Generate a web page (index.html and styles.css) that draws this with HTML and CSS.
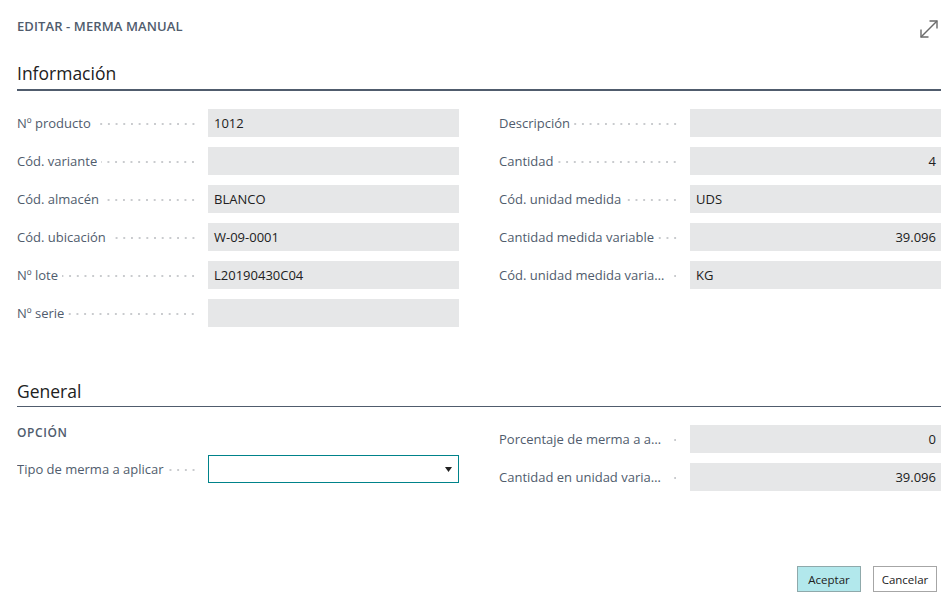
FILE: index.html
```html
<!DOCTYPE html>
<html lang="es">
<head>
<meta charset="utf-8">
<title>Editar - Merma manual</title>
<link rel="stylesheet" href="styles.css">
</head>
<body>
<div class="page">
  <header class="header">
    <div class="title">EDITAR - MERMA MANUAL</div>
    <button class="expand" aria-label="Expandir">
      <svg width="22" height="22" viewBox="0 0 22 22" fill="none" stroke="#6b6b6b" stroke-width="1.4">
        <path d="M3 19 L19 3"/>
        <path d="M11.5 3 H19 V10.5"/>
        <path d="M3 11.5 V19 H10.5"/>
      </svg>
    </button>
  </header>

  <section class="section">
    <h2 class="section-title strong">Información</h2>
    <div class="grid">
      <div class="col">
        <div class="field"><div class="label"><span class="text">Nº producto</span><span class="leader"></span></div><div class="value">1012</div></div>
        <div class="field"><div class="label"><span class="text">Cód. variante</span><span class="leader"></span></div><div class="value"></div></div>
        <div class="field"><div class="label"><span class="text">Cód. almacén</span><span class="leader"></span></div><div class="value">BLANCO</div></div>
        <div class="field"><div class="label"><span class="text">Cód. ubicación</span><span class="leader"></span></div><div class="value">W-09-0001</div></div>
        <div class="field"><div class="label"><span class="text">Nº lote</span><span class="leader"></span></div><div class="value">L20190430C04</div></div>
        <div class="field"><div class="label"><span class="text">Nº serie</span><span class="leader"></span></div><div class="value"></div></div>
      </div>
      <div class="col">
        <div class="field"><div class="label"><span class="text">Descripción</span><span class="leader"></span></div><div class="value"></div></div>
        <div class="field"><div class="label"><span class="text">Cantidad</span><span class="leader"></span></div><div class="value num">4</div></div>
        <div class="field"><div class="label"><span class="text">Cód. unidad medida</span><span class="leader"></span></div><div class="value">UDS</div></div>
        <div class="field"><div class="label"><span class="text">Cantidad medida variable</span><span class="leader"></span></div><div class="value num">39.096</div></div>
        <div class="field"><div class="label"><span class="text">Cód. unidad medida variable</span><span class="leader"></span></div><div class="value">KG</div></div>
      </div>
    </div>
  </section>

  <section class="section general">
    <h2 class="section-title thin">General</h2>
    <div class="grid">
      <div class="col">
        <div class="caption">OPCIÓN</div>
        <div class="field"><div class="label"><span class="text">Tipo de merma a aplicar</span><span class="leader"></span></div>
          <div class="value select"><span></span>
            <svg class="caret" width="7" height="5" viewBox="0 0 7 5"><path d="M0 0 H7 L3.5 5 Z" fill="#222"/></svg>
          </div>
        </div>
      </div>
      <div class="col">
        <div class="field"><div class="label"><span class="text">Porcentaje de merma a aplicar</span><span class="leader"></span></div><div class="value num">0</div></div>
        <div class="field"><div class="label"><span class="text">Cantidad en unidad variable</span><span class="leader"></span></div><div class="value num">39.096</div></div>
      </div>
    </div>
  </section>

  <footer class="footer">
    <button class="btn primary">Aceptar</button>
    <button class="btn">Cancelar</button>
  </footer>
</div>
</body>
</html>
```

FILE: styles.css
```css
* { box-sizing: border-box; }
html, body { margin: 0; padding: 0; background: #fff; }
body {
  font-family: "Open Sans", "Noto Sans", "DejaVu Sans", sans-serif;
  color: #212121;
  width: 952px;
  height: 600px;
  overflow: hidden;
}
.page { padding: 0 11px 0 17px; }

.header {
  height: 52px;
  display: flex;
  justify-content: space-between;
  align-items: flex-start;
}
.title {
  margin-top: 17px;
  font-size: 13px;
  line-height: 18px;
  font-weight: 600;
  color: #505c6d;
  letter-spacing: 0.1px;
}
.expand {
  margin-top: 18px;
  margin-right: 1px;
  padding: 0;
  border: 0;
  background: none;
  width: 22px;
  height: 22px;
  display: block;
}
.expand svg { display: block; }

.section-title {
  margin: 0;
  font-weight: 400;
  font-size: 17.5px;
  line-height: 24px;
  color: #212121;
}
.section-title.strong {
  padding: 9px 0 4px;
  border-bottom: 2px solid #505c6d;
}
.section-title.thin {
  padding: 0 0 3px;
  border-bottom: 1px solid #505c6d;
}
.general { margin-top: 52px; }

.grid {
  margin-top: 18px;
  display: grid;
  grid-template-columns: 442px 442px;
  column-gap: 40px;
}
.col { display: flex; flex-direction: column; gap: 10px; }

.field { display: flex; height: 28px; align-items: center; }
.label {
  width: 191px;
  flex: none;
  display: flex;
  align-items: center;
  padding-right: 11px;
  font-size: 13px;
  color: #505c6d;
  min-width: 0;
}
.label .text {
  white-space: nowrap;
  overflow: hidden;
  text-overflow: ellipsis;
  flex: 0 1 auto;
  min-width: 0;
}
.leader {
  flex: 1 0 7px;
  height: 2px;
  margin-left: 4px;
  background-image: radial-gradient(circle, #c9cbce 0.75px, transparent 1.1px);
  background-size: 7.7px 2px;
  background-repeat: repeat-x;
  background-position: right center;
  margin-top: 2px;
}
.value {
  width: 251px;
  height: 28px;
  background: #e6e7e8;
  font-size: 13px;
  line-height: 28px;
  padding: 0 6px;
  color: #212121;
  white-space: nowrap;
}
.value.num { text-align: right; padding-right: 5px; }
.value.select {
  background: #fff;
  border: 1px solid #00838a;
  display: flex;
  justify-content: space-between;
  align-items: center;
  padding-right: 6px;
}
.caret { display: block; }

.caption {
  height: 16px;
  line-height: 16px;
  font-size: 12px;
  font-weight: 600;
  color: #505c6d;
  letter-spacing: 0.6px;
  margin-bottom: 4px;
}

.footer {
  margin-top: 75px;
  display: flex;
  justify-content: flex-end;
  gap: 12px;
  padding-right: 4px;
}
.btn {
  width: 64px;
  height: 26px;
  font-family: inherit;
  font-size: 11.5px;
  color: #212121;
  background: #fff;
  border: 1px solid #a6a6a6;
  padding: 0;
}
.btn.primary { background: #b2e8ec; border-color: #8fa9ab; }
```
